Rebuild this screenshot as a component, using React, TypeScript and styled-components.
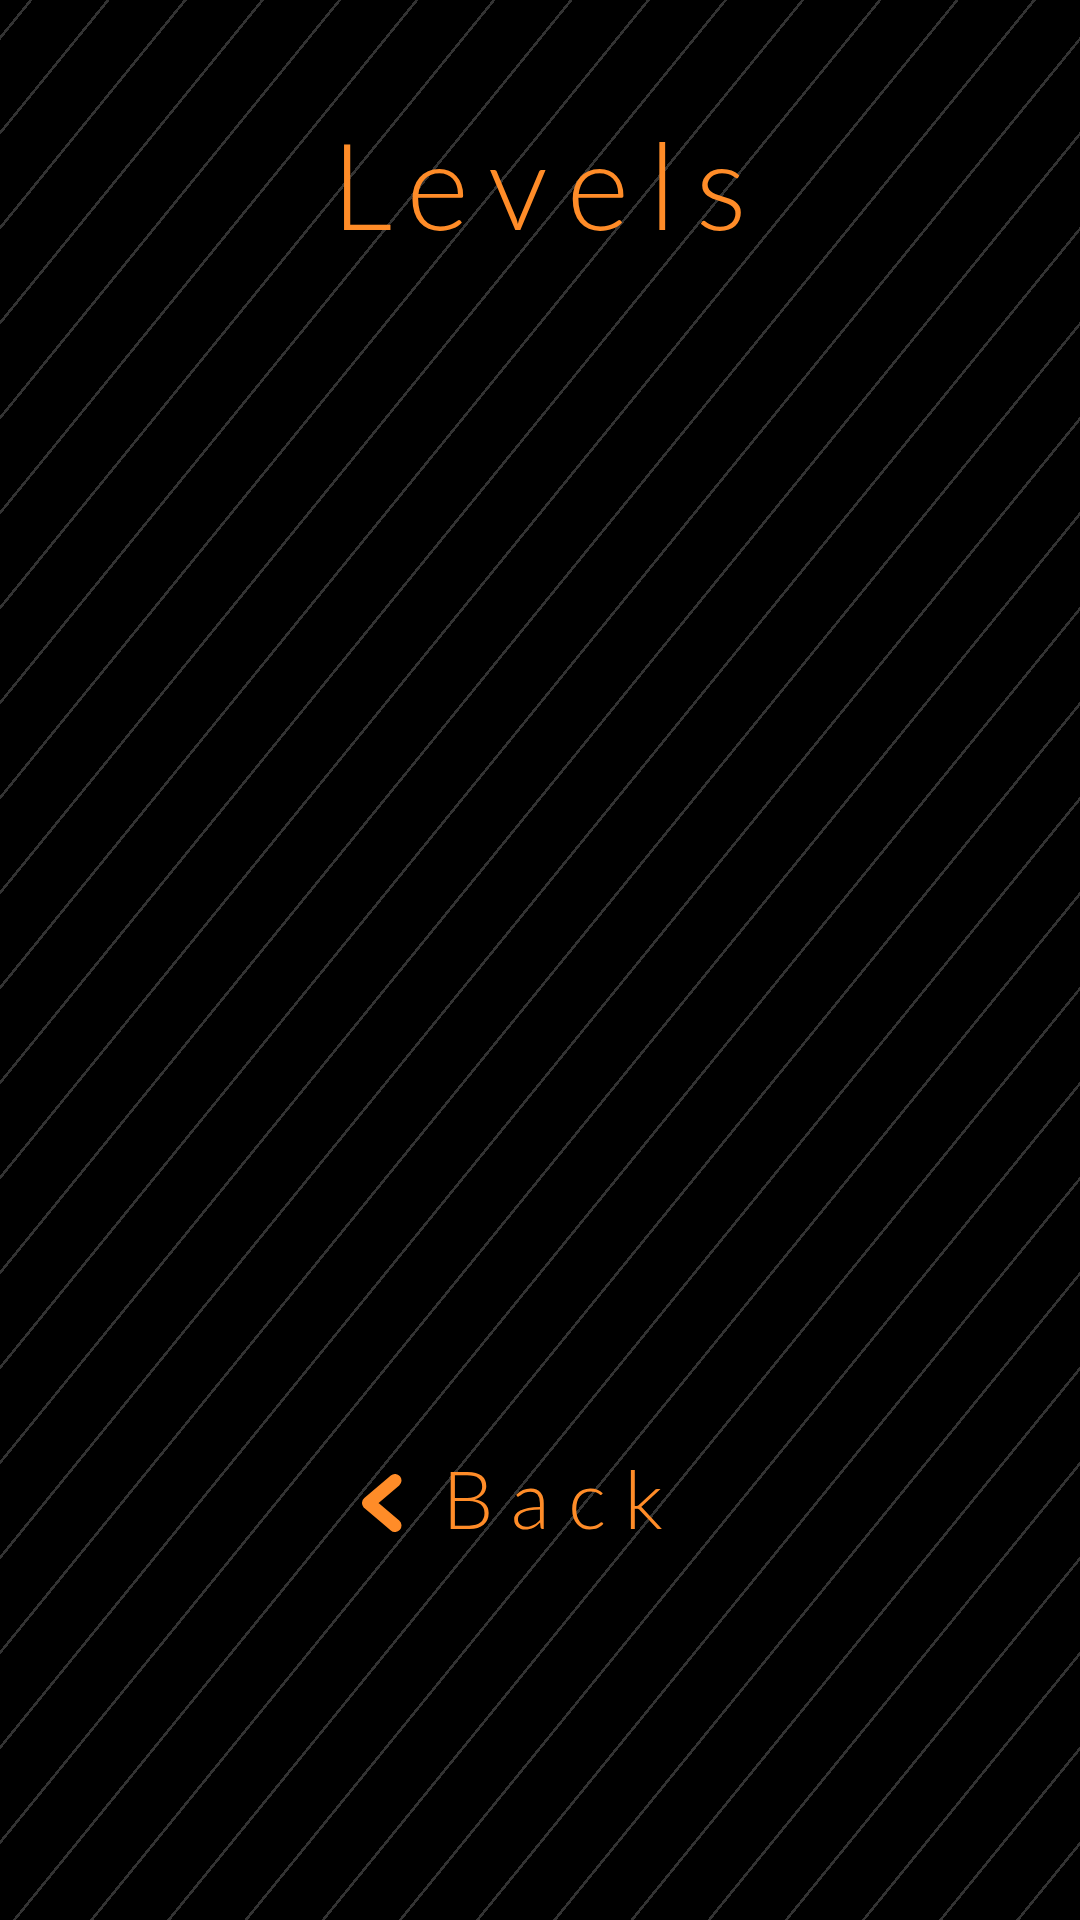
import React from "react";
import styled, { createGlobalStyle } from "styled-components";

const GlobalStyle = createGlobalStyle`
  html, body {
    margin: 0;
    padding: 0;
    background: #000;
  }
  * { box-sizing: border-box; }
`;

const ORANGE = "#ff8c28";

const Screen = styled.div`
  width: 100%;
  height: 100vh;
  min-height: 1920px;
  display: flex;
  flex-direction: column;
  align-items: center;
  padding-top: 124px;
  background-color: #000;
  background-image: repeating-linear-gradient(
    129.1deg,
    transparent 0 22.7px,
    #333333 22.7px 25.3px,
    transparent 25.3px 59.9px
  );
  font-family: "Lato", "Liberation Sans", sans-serif;
  color: ${ORANGE};
`;

const Title = styled.h1`
  margin: 0;
  font-size: 120px;
  line-height: 120px;
  font-weight: 300;
  letter-spacing: 20px;
  padding-left: 18px;
`;

const LevelList = styled.div`
  flex: 0 0 1213px;
  width: 100%;
`;

const BackButton = styled.button`
  display: inline-flex;
  align-items: center;
  gap: 40px;
  background: none;
  border: none;
  padding: 0 37px 0 0;
  margin: 0;
  cursor: pointer;
  color: ${ORANGE};
  font-family: inherit;
`;

const ChevronIcon = styled.svg`
  display: block;
  flex: none;
  margin-top: 10px;
`;

const BackLabel = styled.span`
  font-size: 81px;
  line-height: 81px;
  font-weight: 300;
  letter-spacing: 18px;
`;

const Chevron = () => (
  <ChevronIcon width="40" height="58" viewBox="0 0 40 58" aria-hidden="true">
    <polyline
      points="33,6.5 6.5,29 33,51.5"
      fill="none"
      stroke={ORANGE}
      strokeWidth="13"
      strokeLinecap="round"
      strokeLinejoin="round"
    />
  </ChevronIcon>
);

export default function App() {
  return (
    <>
      <GlobalStyle />
      <Screen>
        <Title>Levels</Title>
        <LevelList />
        <BackButton type="button">
          <Chevron />
          <BackLabel>Back</BackLabel>
        </BackButton>
      </Screen>
    </>
  );
}
